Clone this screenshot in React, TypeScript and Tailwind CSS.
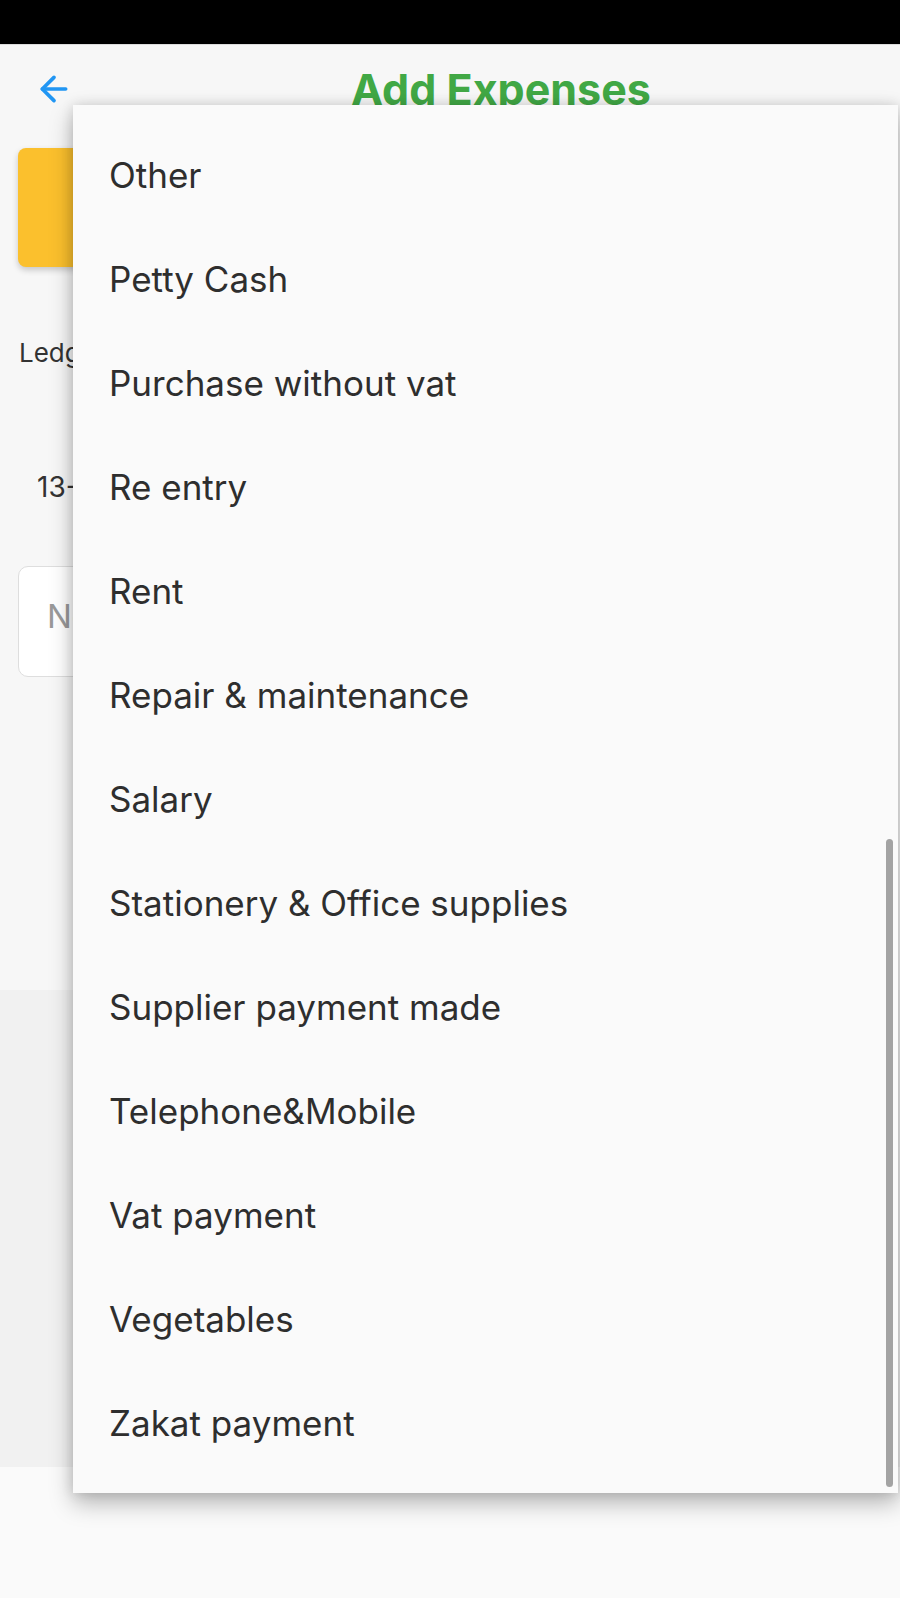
import { ArrowLeft } from 'lucide-react';

const categories = [
    'Other',
    'Petty Cash',
    'Purchase without vat',
    'Re entry',
    'Rent',
    'Repair & maintenance',
    'Salary',
    'Stationery & Office supplies',
    'Supplier payment made',
    'Telephone&Mobile',
    'Vat payment',
    'Vegetables',
    'Zakat payment',
];

export default function App() {
    return (
        <div className="relative w-[900px] h-[1598px] overflow-hidden bg-[#fafafa] font-['Inter','Roboto',sans-serif]">
            {/* status bar */}
            <div className="h-[44px] bg-black" />

            {/* page behind the menu */}
            <div className="bg-[#f7f7f7] h-[946px] border-t border-[#dcdcdc]">
                <div className="flex items-center h-[88px] pl-[34px]">
                    <ArrowLeft size={40} strokeWidth={2.2} className="text-[#2196f3]" />
                    <h1 className="ml-[277px] text-[43px] font-bold text-[#41a845] whitespace-nowrap">Add Expenses</h1>
                </div>

                <div className="mx-[18px] mt-[15px] h-[119px] rounded-[8px] bg-[#fbc02d] shadow-[0_3px_6px_rgba(0,0,0,0.2)]" />

                {/* labels clipped where the menu covers them */}
                <p className="mt-[66px] ml-[19px] w-[54px] overflow-hidden whitespace-nowrap text-[26px] text-[#333]">Ledger</p>

                <p className="mt-[94px] ml-[37px] w-[36px] overflow-hidden whitespace-nowrap text-[28px] text-[#333]">13-08-2023</p>

                <div className="mx-[18px] mt-[58px] h-[111px] rounded-[10px] border border-[#dedede] bg-white flex items-center pl-[28px] pb-[10px]">
                    <span className="w-[45px] overflow-hidden whitespace-nowrap text-[33px] text-[#9a9a9a]">Notes</span>
                </div>
            </div>
            <div className="bg-[#f1f1f1] h-[477px]" />

            {/* dropdown menu */}
            <div className="absolute left-[73px] top-[105px] right-[2px] h-[1388px] bg-[#fafafa] pt-[18px] shadow-[0_10px_22px_rgba(0,0,0,0.28),0_0_12px_rgba(0,0,0,0.12)]">
                {categories.map((c) => (
                    <div key={c} className="h-[104px] flex items-center pl-[36px] text-[35px] text-[#2e2e2e]">
                        {c}
                    </div>
                ))}
                <div className="absolute right-[5px] top-[734px] w-[7px] h-[648px] rounded-full bg-[#a3a3a3]" />
            </div>
        </div>
    );
}
